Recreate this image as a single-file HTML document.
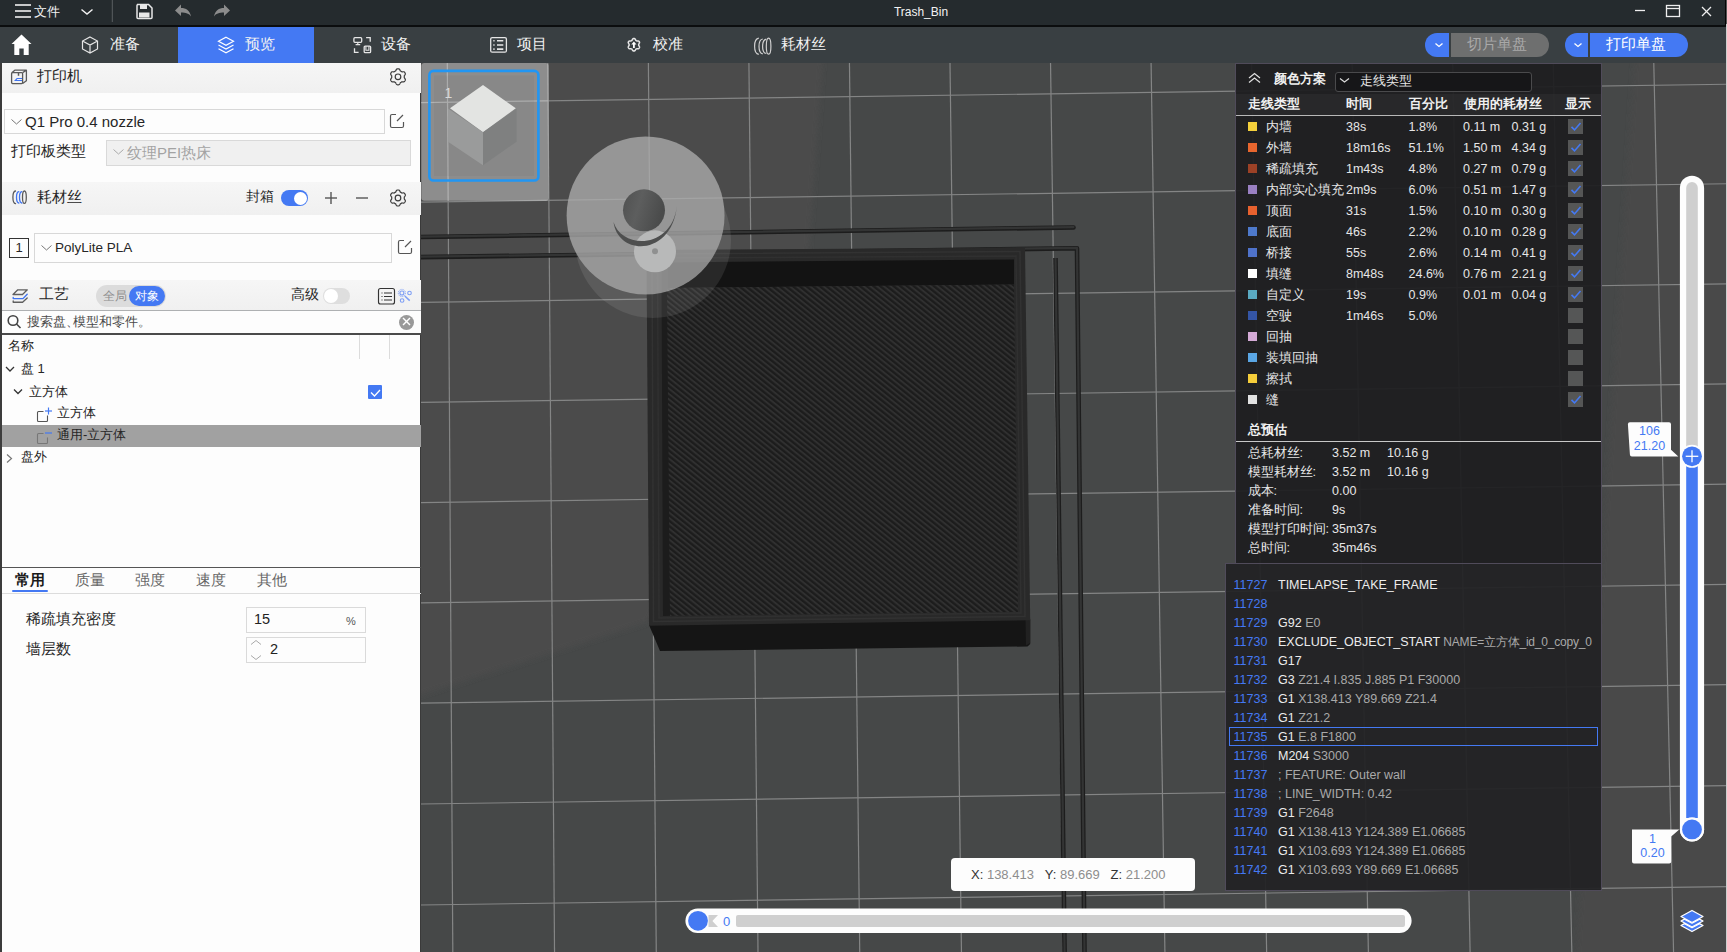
<!DOCTYPE html>
<html><head><meta charset="utf-8">
<style>
html,body{margin:0;padding:0;width:1727px;height:952px;overflow:hidden;background:#474a4a;font-family:"Liberation Sans",sans-serif;}
.a{position:absolute;white-space:nowrap;}
svg{position:absolute;overflow:visible;}
.tt{color:#f2f2f2;font-size:15px;line-height:16px;}
</style></head><body>
<!-- VIEWPORT -->
<svg class="a" style="left:0;top:0" width="1727" height="952" viewBox="0 0 1727 952">
<rect x="421" y="63" width="1306" height="889" fill="#464848"/>
<defs><filter id="bl" x="-5%" y="-5%" width="110%" height="110%"><feGaussianBlur stdDeviation="2.5"/></filter></defs>
<polygon points="415,55 823,55 808,260 648,622 415,697" fill="#4b4c4c" filter="url(#bl)"/>
<polygon points="1635,55 1740,55 1740,960 1576,960" fill="#494a4a" filter="url(#bl)"/>
<g stroke="#848585" stroke-width="1.2" fill="none">
<line x1="421" y1="102.69" x2="1727" y2="84.27"/>
<line x1="421" y1="202.19" x2="1727" y2="183.77"/>
<line x1="421" y1="302.29" x2="1727" y2="283.87"/>
<line x1="421" y1="402.39" x2="1727" y2="383.97"/>
<line x1="421" y1="502.59" x2="1727" y2="484.17"/>
<line x1="421" y1="602.79" x2="1727" y2="584.37"/>
<line x1="421" y1="703.09" x2="1727" y2="684.67"/>
<line x1="421" y1="803.99" x2="1727" y2="785.57"/>
<line x1="421" y1="904.99" x2="1727" y2="886.57"/>
<line x1="447.30" y1="63" x2="452.81" y2="952"/>
<line x1="547.84" y1="63" x2="554.54" y2="952"/>
<line x1="648.38" y1="63" x2="656.27" y2="952"/>
<line x1="748.92" y1="63" x2="758.00" y2="952"/>
<line x1="849.46" y1="63" x2="859.73" y2="952"/>
<line x1="950.00" y1="63" x2="961.46" y2="952"/>
<line x1="1050.54" y1="63" x2="1063.18" y2="952"/>
<line x1="1151.08" y1="63" x2="1164.91" y2="952"/>
<line x1="1251.62" y1="63" x2="1266.64" y2="952"/>
<line x1="1352.16" y1="63" x2="1368.37" y2="952"/>
<line x1="1452.70" y1="63" x2="1470.10" y2="952"/>
<line x1="1553.24" y1="63" x2="1571.83" y2="952"/>
<line x1="1653.78" y1="63" x2="1673.56" y2="952"/>
</g>
</svg>
<svg class="a" style="left:0;top:0" width="1727" height="952" viewBox="0 0 1727 952">
<defs>
<pattern id="hatch" patternUnits="userSpaceOnUse" width="4.2" height="10" patternTransform="rotate(-51.3)">
<rect width="4.2" height="10" fill="#1c1c1c"/><rect x="0.6" width="1.9" height="10" fill="#303030"/>
</pattern>
</defs>
<!-- travel lines -->
<g stroke="#1d1d1d" stroke-width="4.6" fill="none" stroke-linecap="round" stroke-linejoin="round">
<line x1="421" y1="237" x2="1073.5" y2="227.5"/>
<polyline points="421,257.1 1077,248.3 1084.5,952"/>
<line x1="1055.5" y1="258" x2="1064.6" y2="952" stroke-linecap="butt"/>
</g>
<g stroke="#333434" stroke-width="2.2" fill="none" stroke-linecap="round" stroke-linejoin="round">
<line x1="421" y1="236.6" x2="1073.5" y2="227.1"/>
<polyline points="421,256.7 1077,247.9 1084.5,952"/>
<line x1="1055.5" y1="258" x2="1064.6" y2="952" stroke-linecap="butt"/>
</g>
<!-- box front face -->
<polygon points="649,625 1030.2,619.5 1030.2,644 1027.5,646.5 660,651" fill="#151515"/>
<polygon points="1025.5,620 1030.2,619.6 1030.2,643 1026,645.5" fill="#212121"/>
<!-- box top face -->
<polygon points="646.5,250 1025,247.8 1030.2,620.2 649,625.7" fill="#292929"/>
<polygon points="652,254 1020,251.5 1025,616.5 653.5,621.5" fill="none" stroke="#323232" stroke-width="1.5"/>
<polygon points="657.5,258 1016,256 1021,613 659,618" fill="none" stroke="#303030" stroke-width="1.5"/>
<polygon points="662,262.5 1014,259.4 1014,284.6 667,288" fill="#131313"/>
<polygon points="661.5,262.5 668,262 670,615.7 663,616" fill="#1c1c1c"/>
<polygon points="667,288 1014,284.6 1018,612 670,615.7" fill="url(#hatch)"/>
<!-- thumbnail panel -->
<rect x="421.3" y="62.9" width="127.3" height="137.8" rx="3" fill="#fff" fill-opacity="0.37"/>
<rect x="434" y="75.5" width="100" height="100.5" fill="#000" fill-opacity="0.03"/>
<rect x="429.4" y="70.9" width="109" height="109.6" rx="4" fill="none" stroke="#2196f3" stroke-width="2.6"/>
<polygon points="483,85 515.8,108.3 483,132.2 450,108.3" fill="#e3e4e2"/>
<polygon points="448,108.6 483,132.2 483,165.3 448,141.7" fill="#9a9b9b"/>
<polygon points="483,132.2 516.6,108.6 516.6,141.7 483,165.3" fill="#7f8080"/>
<text x="444.5" y="98" font-size="14" fill="#d8d8d8" font-family="Liberation Sans">1</text>
<!-- gizmo -->
<mask id="m2"><rect x="500" y="100" width="300" height="300" fill="#fff"/><circle cx="645.6" cy="215.6" r="79" fill="#000"/></mask>
<circle cx="653" cy="240" r="78" fill="#fff" fill-opacity="0.09" mask="url(#m2)"/>
<circle cx="645.6" cy="215.6" r="79" fill="#adaeae" fill-opacity="0.76"/>
<circle cx="655" cy="251.3" r="21" fill="#b8b9b9"/>
<circle cx="655" cy="251.3" r="3" fill="#8f9090"/>
<defs><linearGradient id="dg" x1="0" y1="0" x2="1" y2="0.3"><stop offset="0" stop-color="#4f5050"/><stop offset="0.45" stop-color="#5d5e5e"/><stop offset="1" stop-color="#4a4b4b"/></linearGradient></defs>
<circle cx="644" cy="210.3" r="21" fill="url(#dg)"/>
<path d="M613.5,222 C618,256.7 672,256.7 677,205.5 C672,249.7 622,249.7 613.5,222 Z" fill="#4e4f4f"/>
</svg>

<!-- TITLE BAR -->
<div class="a" style="left:0;top:0;width:1727px;height:25px;background:#252b2e"></div>
<div class="a" style="left:0;top:25px;width:1727px;height:2px;background:#0b0d0e"></div>
<div class="a" style="left:0;top:27px;width:1727px;height:36px;background:#393f42"></div>
<div class="a" style="left:178px;top:27px;width:136px;height:36px;background:#4479f3"></div>
<!-- hamburger -->
<svg class="a" style="left:0;top:0" width="260" height="63">
<g stroke="#f0f0f0" stroke-width="1.6" fill="none">
<line x1="15" y1="5" x2="31" y2="5"/><line x1="15" y1="11" x2="31" y2="11"/><line x1="15" y1="17" x2="31" y2="17"/>
<polyline points="81.5,9.5 87,14 92.5,9.5" stroke-width="1.5"/>
</g>
<line x1="112.3" y1="0" x2="112.3" y2="22" stroke="#5a5f62" stroke-width="1"/>
<!-- save -->
<path d="M137,4.5 h11.5 l3.5,3.5 v9.5 a1,1 0 0 1 -1,1 h-13 a1,1 0 0 1 -1,-1 v-12 a1,1 0 0 1 1,-1 z" fill="none" stroke="#e8e8e8" stroke-width="1.5"/>
<rect x="140" y="4.5" width="7" height="4.5" fill="#e8e8e8"/>
<rect x="139" y="12.5" width="10.5" height="5" fill="#e8e8e8"/>
<!-- undo -->
<path d="M175,10.5 l6,-6 v3.5 c5,0 9,2.5 10,8.5 c-2,-3 -5,-4 -10,-4 v3.5 z" fill="#8c8c8c"/>
<path d="M230,10.5 l-6,-6 v3.5 c-5,0 -9,2.5 -10,8.5 c2,-3 5,-4 10,-4 v3.5 z" fill="#8c8c8c"/>
<!-- home -->
<path d="M21.5,34.5 L31.5,44 h-2.8 v11 h-5 v-6.5 h-4.4 v6.5 h-5 v-11 h-2.8 z" fill="#fff"/>
<!-- cube -->
<g fill="none" stroke="#e6e6e6" stroke-width="1.2">
<path d="M90,37 l7.5,4 v8 l-7.5,4 l-7.5,-4 v-8 z M82.5,41 l7.5,4 l7.5,-4 M90,45 v8"/>
</g>
<!-- layers (preview) -->
<g fill="none" stroke="#fff" stroke-width="1.2">
<path d="M226,37.3 l7.5,4 l-7.5,4 l-7.5,-4 z"/>
<path d="M218.5,45 l7.5,4 l7.5,-4"/>
<path d="M218.5,48.7 l7.5,4 l7.5,-4"/>
</g>
</svg>
<div class="a" style="left:34px;top:4px;color:#f2f2f2;font-size:13px;line-height:16px">文件</div>
<div class="a" style="left:0;top:4px;width:1842px;text-align:center;color:#f2f2f2;font-size:12px;line-height:16px">Trash_Bin</div>
<svg class="a" style="left:1620px;top:0" width="107" height="25">
<g stroke="#eee" stroke-width="1.3" fill="none">
<line x1="15" y1="10.5" x2="25" y2="10.5"/>
<rect x="46.5" y="5.5" width="13" height="11"/><line x1="46.5" y1="8.5" x2="59.5" y2="8.5"/>
<line x1="82" y1="7" x2="91" y2="16"/><line x1="91" y1="7" x2="82" y2="16"/>
</g>
</svg>
<!-- tab labels -->
<div class="a tt" style="left:110px;top:36px">准备</div>
<div class="a tt" style="left:245px;top:36px">预览</div>
<div class="a tt" style="left:381px;top:36px">设备</div>
<div class="a tt" style="left:517px;top:36px">项目</div>
<div class="a tt" style="left:653px;top:36px">校准</div>
<div class="a tt" style="left:781px;top:36px">耗材丝</div>
<svg class="a" style="left:340px;top:27px" width="450" height="36">
<g fill="none" stroke="#e6e6e6" stroke-width="1.2">
<!-- device icon -->
<rect x="13.9" y="10.7" width="7.8" height="4.6" rx="1" stroke-width="1.3"/>
<path d="M17.8,15.3 v2.2 M15.6,17.7 h4.6" stroke-width="1.2"/>
<path d="M26.1,10.6 H30.2 V14.7 M14.5,21.3 V25.4 H18.6" stroke-width="1.3"/>
<rect x="24.2" y="19.1" width="6.4" height="6.6" rx="1" stroke-width="1.3"/>
<path d="M25.9,19.3 V23.2 H28.9 V19.3" stroke-width="1.1"/>
<!-- project icon -->
<rect x="150.7" y="10.6" width="15.7" height="14.6" rx="1.5" stroke-width="1.3"/>
<path d="M153.3,13.8 h1.3 M157,13.8 h6.3 M153.3,18 h1.3 M157,18 h6.3 M153.3,22.1 h1.3 M157,22.1 h6.3" stroke-width="1.6"/>
<!-- calib icon -->
<path d="M298.70,17.80 L298.69,18.11 L298.71,18.43 L298.95,18.81 L299.21,19.22 L299.44,19.68 L299.58,20.15 L299.46,20.54 L299.27,20.90 L299.06,21.24 L298.77,21.54 L298.30,21.66 L297.79,21.69 L297.30,21.67 L296.86,21.65 L296.57,21.79 L296.30,21.96 L296.02,22.10 L295.76,22.29 L295.56,22.68 L295.32,23.11 L295.04,23.54 L294.70,23.89 L294.31,23.99 L293.90,24.00 L293.49,23.99 L293.10,23.89 L292.76,23.54 L292.48,23.11 L292.24,22.68 L292.04,22.29 L291.78,22.10 L291.50,21.96 L291.23,21.79 L290.94,21.65 L290.50,21.67 L290.01,21.69 L289.50,21.66 L289.03,21.54 L288.74,21.24 L288.53,20.90 L288.34,20.54 L288.22,20.15 L288.36,19.68 L288.59,19.22 L288.85,18.81 L289.09,18.43 L289.11,18.11 L289.10,17.80 L289.11,17.49 L289.09,17.17 L288.85,16.79 L288.59,16.38 L288.36,15.92 L288.22,15.45 L288.34,15.06 L288.53,14.70 L288.74,14.36 L289.03,14.06 L289.50,13.94 L290.01,13.91 L290.50,13.93 L290.94,13.95 L291.23,13.81 L291.50,13.64 L291.78,13.50 L292.04,13.31 L292.24,12.92 L292.48,12.49 L292.76,12.06 L293.10,11.71 L293.49,11.61 L293.90,11.60 L294.31,11.61 L294.70,11.71 L295.04,12.06 L295.32,12.49 L295.56,12.92 L295.76,13.31 L296.02,13.50 L296.30,13.64 L296.57,13.81 L296.86,13.95 L297.30,13.93 L297.79,13.91 L298.30,13.94 L298.77,14.06 L299.06,14.36 L299.27,14.70 L299.46,15.06 L299.58,15.45 L299.44,15.92 L299.21,16.38 L298.95,16.79 L298.71,17.17 L298.69,17.49 Z" stroke-width="1.5"/>
<path d="M293.9,14.6 L296.5,17.4 H294.8 V21 H293 V17.4 H291.3 Z" fill="#fff" stroke="none"/>
<!-- filament icon -->
<g stroke="#d0d0d0" stroke-width="1.2"><path d="M418.8,11.2 C415,11.8 414.6,15 414.6,19.2 C414.6,23.5 415,26.8 418.8,27.3"/><path d="M422.8,12 C419.5,12.5 419,15.5 419,19.4 C419,23.3 419.5,26.2 422.8,26.8"/><path d="M426.3,12.2 C423,12.8 422.6,15.7 422.6,19.4 C422.6,23 423,26 426.3,26.5"/><ellipse cx="428.6" cy="19.2" rx="2.3" ry="8"/></g>
</g>
</svg>
<!-- slice / print buttons -->
<div class="a" style="left:1425px;top:33px;width:24px;height:24px;background:#4479f3;border-radius:12px 0 0 12px"></div>
<div class="a" style="left:1451px;top:33px;width:98px;height:24px;background:#6e6f6f;border-radius:0 12px 12px 0"></div>
<div class="a" style="left:1565px;top:33px;width:23px;height:24px;background:#4479f3;border-radius:12px 0 0 12px"></div>
<div class="a" style="left:1590px;top:33px;width:98px;height:24px;background:#4479f3;border-radius:0 12px 12px 0"></div>
<svg class="a" style="left:1420px;top:33px" width="180" height="24">
<g fill="none" stroke="#fff" stroke-width="1.3"><polyline points="15.5,10.5 19,13.5 22.5,10.5"/><polyline points="154.5,10.5 158,13.5 161.5,10.5"/></g>
</svg>
<div class="a" style="left:1467px;top:36px;color:#a9a9a9;font-size:14.5px;line-height:16px">切片单盘</div>
<div class="a" style="left:1606px;top:36px;color:#fff;font-size:14.5px;line-height:16px">打印单盘</div>

<!-- LEFT PANEL -->
<div class="a" style="left:0;top:63px;width:421px;height:889px;background:#fdfdfd;border-right:1px solid #3a3a3a;box-sizing:border-box"></div>
<div class="a" style="left:0;top:63px;width:2px;height:889px;background:#3c3c3c"></div>
<style>
.hd{left:2px;width:419px;height:30px;background:linear-gradient(#f6f6f6,#f0f0f0);}
.t15{font-size:15px;line-height:16px;color:#262626;}
.t14{font-size:14px;line-height:16px;color:#262626;}
.t13{font-size:13px;line-height:16px;color:#262626;}
</style>
<!-- printer section -->
<div class="a hd" style="top:63px"></div>
<div class="a t15" style="left:37px;top:68px">打印机</div>
<div class="a" style="left:4px;top:109px;width:381px;height:25px;border:1px solid #d8d8d8;box-sizing:border-box;background:#fdfdfd"></div>
<div class="a" style="left:25px;top:113px;font-size:15px;line-height:17px;color:#262626">Q1 Pro 0.4 nozzle</div>
<div class="a t15" style="left:11px;top:143px">打印板类型</div>
<div class="a" style="left:106px;top:140px;width:305px;height:26px;border:1px solid #d9d9d9;box-sizing:border-box;background:#f0f0f0"></div>
<div class="a" style="left:127px;top:144px;font-size:15px;line-height:17px;color:#a3a3a3">纹理PEI热床</div>
<!-- filament section -->
<div class="a hd" style="top:182px;height:33px"></div>
<div class="a t15" style="left:37px;top:189px">耗材丝</div>
<div class="a t14" style="left:246px;top:188px">封箱</div>
<div class="a" style="left:281px;top:190px;width:27px;height:16px;border-radius:8px;background:#4479f3"></div>
<div class="a" style="left:294px;top:191.5px;width:13px;height:13px;border-radius:7px;background:#fff"></div>
<div class="a" style="left:9px;top:238px;width:20px;height:20px;border:1px solid #333;box-sizing:border-box;font-size:13px;line-height:18px;text-align:center;color:#262626">1</div>
<div class="a" style="left:34px;top:233px;width:358px;height:30px;border:1px solid #d8d8d8;box-sizing:border-box;background:#fdfdfd"></div>
<div class="a" style="left:55px;top:240px;font-size:13.5px;line-height:16px;color:#262626">PolyLite PLA</div>
<!-- process section -->
<div class="a hd" style="top:280px;height:31px"></div>
<div class="a" style="left:2px;top:310px;width:419px;height:1px;background:#aeb0b2"></div>
<div class="a t15" style="left:39px;top:286px">工艺</div>
<div class="a" style="left:96px;top:285px;width:70px;height:22px;border-radius:11px;background:#dcdcdc"></div>
<div class="a" style="left:129px;top:286px;width:36px;height:20px;border-radius:10px;background:#4479f3"></div>
<div class="a" style="left:103px;top:288px;font-size:12px;line-height:16px;color:#8d8d8d">全局</div>
<div class="a" style="left:135px;top:288px;font-size:12px;line-height:16px;color:#fff">对象</div>
<div class="a t14" style="left:291px;top:286px">高级</div>
<div class="a" style="left:323px;top:288px;width:27px;height:16px;border-radius:8px;background:#dedede"></div>
<div class="a" style="left:324px;top:289px;width:14px;height:14px;border-radius:7px;background:#fff"></div>
<!-- search -->
<div class="a" style="left:2px;top:311px;width:419px;height:23px;background:#fdfdfd"></div>
<div class="a" style="left:2px;top:333px;width:419px;height:2px;background:#4a4a4a"></div>
<div class="a" style="left:26.5px;top:314px;font-size:12.5px;line-height:16px;color:#4a4a4a">搜索盘<span style="margin-right:-6px">、</span>模型和零件。</div>
<div class="a" style="left:399px;top:315px;width:15px;height:15px;border-radius:8px;background:#999"></div>
<!-- tree -->
<div class="a t13" style="left:8px;top:338px">名称</div>
<div class="a" style="left:359px;top:335px;width:1px;height:24px;background:#dcdcdc"></div>
<div class="a" style="left:389px;top:335px;width:1px;height:24px;background:#dcdcdc"></div>
<div class="a t13" style="left:21px;top:361px">盘 1</div>
<div class="a t13" style="left:29px;top:384px">立方体</div>
<div class="a" style="left:368px;top:385px;width:14px;height:14px;background:#4479f3;border-radius:1px"></div>
<div class="a t13" style="left:57px;top:405px">立方体</div>
<div class="a" style="left:2px;top:425px;width:419px;height:22px;background:#a1a1a1"></div>
<div class="a t13" style="left:57px;top:427px">通用-立方体</div>
<div class="a t13" style="left:21px;top:449px">盘外</div>
<svg class="a" style="left:0;top:63px" width="421" height="889">
<g fill="none" stroke="#5a5a5a" stroke-width="1.3" stroke-linejoin="round">
<!-- printer icon -->
<rect x="11.6" y="9.6" width="11" height="11" rx="1"/>
<path d="M11.8,9.8 l3,-2.6 h11.6 v10.6 l-3.8,2.8 M22.6,9.6 l3.8,-2.4"/>
<path d="M18.5,9.6 v3.2" stroke-width="1.5"/>
</g>
<path d="M14,18 l2.8,-3 h5.2 v1.1 h-4.6 l-0.8,0.9 h5.4 v1 z" fill="#3f74f0"/>
<!-- gear icons -->
<g fill="none" stroke="#3c3c3c" stroke-width="1.2">
<path d="M404.30,13.80 L404.29,14.13 L404.27,14.46 L404.32,14.80 L404.61,15.20 L404.91,15.65 L405.17,16.13 L405.37,16.63 L405.31,17.05 L405.13,17.43 L404.93,17.80 L404.71,18.16 L404.47,18.50 L404.14,18.77 L403.61,18.85 L403.06,18.86 L402.52,18.82 L402.03,18.77 L401.70,18.90 L401.43,19.08 L401.15,19.26 L400.86,19.41 L400.56,19.56 L400.29,19.78 L400.09,20.23 L399.85,20.71 L399.57,21.18 L399.24,21.60 L398.84,21.76 L398.42,21.79 L398.00,21.80 L397.58,21.79 L397.16,21.76 L396.76,21.60 L396.43,21.18 L396.15,20.71 L395.91,20.23 L395.71,19.78 L395.44,19.56 L395.14,19.41 L394.85,19.26 L394.57,19.08 L394.30,18.90 L393.97,18.77 L393.48,18.82 L392.94,18.86 L392.39,18.85 L391.86,18.77 L391.53,18.50 L391.29,18.16 L391.07,17.80 L390.87,17.43 L390.69,17.05 L390.63,16.63 L390.83,16.13 L391.09,15.65 L391.39,15.20 L391.68,14.80 L391.73,14.46 L391.71,14.13 L391.70,13.80 L391.71,13.47 L391.73,13.14 L391.68,12.80 L391.39,12.40 L391.09,11.95 L390.83,11.47 L390.63,10.97 L390.69,10.55 L390.87,10.17 L391.07,9.80 L391.29,9.44 L391.53,9.10 L391.86,8.83 L392.39,8.75 L392.94,8.74 L393.48,8.78 L393.97,8.83 L394.30,8.70 L394.57,8.52 L394.85,8.34 L395.14,8.19 L395.44,8.04 L395.71,7.82 L395.91,7.37 L396.15,6.89 L396.43,6.42 L396.76,6.00 L397.16,5.84 L397.58,5.81 L398.00,5.80 L398.42,5.81 L398.84,5.84 L399.24,6.00 L399.57,6.42 L399.85,6.89 L400.09,7.37 L400.29,7.82 L400.56,8.04 L400.86,8.19 L401.15,8.34 L401.43,8.52 L401.70,8.70 L402.03,8.83 L402.52,8.78 L403.06,8.74 L403.61,8.75 L404.14,8.83 L404.47,9.10 L404.71,9.44 L404.93,9.80 L405.13,10.17 L405.31,10.55 L405.37,10.97 L405.17,11.47 L404.91,11.95 L404.61,12.40 L404.32,12.80 L404.27,13.14 L404.29,13.47 Z"/>
<circle cx="398" cy="13.8" r="2.8"/>
<path d="M404.30,135.00 L404.29,135.33 L404.27,135.66 L404.32,136.00 L404.61,136.40 L404.91,136.85 L405.17,137.33 L405.37,137.83 L405.31,138.25 L405.13,138.63 L404.93,139.00 L404.71,139.36 L404.47,139.70 L404.14,139.97 L403.61,140.05 L403.06,140.06 L402.52,140.02 L402.03,139.97 L401.70,140.10 L401.43,140.28 L401.15,140.46 L400.86,140.61 L400.56,140.76 L400.29,140.98 L400.09,141.43 L399.85,141.91 L399.57,142.38 L399.24,142.80 L398.84,142.96 L398.42,142.99 L398.00,143.00 L397.58,142.99 L397.16,142.96 L396.76,142.80 L396.43,142.38 L396.15,141.91 L395.91,141.43 L395.71,140.98 L395.44,140.76 L395.14,140.61 L394.85,140.46 L394.57,140.28 L394.30,140.10 L393.97,139.97 L393.48,140.02 L392.94,140.06 L392.39,140.05 L391.86,139.97 L391.53,139.70 L391.29,139.36 L391.07,139.00 L390.87,138.63 L390.69,138.25 L390.63,137.83 L390.83,137.33 L391.09,136.85 L391.39,136.40 L391.68,136.00 L391.73,135.66 L391.71,135.33 L391.70,135.00 L391.71,134.67 L391.73,134.34 L391.68,134.00 L391.39,133.60 L391.09,133.15 L390.83,132.67 L390.63,132.17 L390.69,131.75 L390.87,131.37 L391.07,131.00 L391.29,130.64 L391.53,130.30 L391.86,130.03 L392.39,129.95 L392.94,129.94 L393.48,129.98 L393.97,130.03 L394.30,129.90 L394.57,129.72 L394.85,129.54 L395.14,129.39 L395.44,129.24 L395.71,129.02 L395.91,128.57 L396.15,128.09 L396.43,127.62 L396.76,127.20 L397.16,127.04 L397.58,127.01 L398.00,127.00 L398.42,127.01 L398.84,127.04 L399.24,127.20 L399.57,127.62 L399.85,128.09 L400.09,128.57 L400.29,129.02 L400.56,129.24 L400.86,129.39 L401.15,129.54 L401.43,129.72 L401.70,129.90 L402.03,130.03 L402.52,129.98 L403.06,129.94 L403.61,129.95 L404.14,130.03 L404.47,130.30 L404.71,130.64 L404.93,131.00 L405.13,131.37 L405.31,131.75 L405.37,132.17 L405.17,132.67 L404.91,133.15 L404.61,133.60 L404.32,134.00 L404.27,134.34 L404.29,134.67 Z"/>
<circle cx="398" cy="135" r="2.8"/>
</g>
<!-- chevrons in dropdowns -->
<g fill="none" stroke="#777" stroke-width="1">
<polyline points="11.5,56.5 16.5,61 21.5,56.5"/>
<polyline points="113.5,86.5 118.5,91 123.5,86.5" stroke="#aaa"/>
<polyline points="41.5,182.5 46.5,187 51.5,182.5"/>
</g>
<!-- edit icons -->
<g fill="none" stroke="#555" stroke-width="1.2">
<path d="M396,51.5 h-4 a1.5,1.5 0 0 0 -1.5,1.5 v10 a1.5,1.5 0 0 0 1.5,1.5 h10 a1.5,1.5 0 0 0 1.5,-1.5 v-4 M397,58 l6,-6"/>
<path d="M404,177.5 h-4 a1.5,1.5 0 0 0 -1.5,1.5 v10 a1.5,1.5 0 0 0 1.5,1.5 h10 a1.5,1.5 0 0 0 1.5,-1.5 v-4 M405,184 l6,-6"/>
</g>
<!-- filament icon -->
<g fill="none" stroke-width="1.3" stroke-linecap="round">
<path d="M15.5,128 C13.2,128.3 12.9,131 12.9,134.2 C12.9,137.5 13.2,140.2 15.5,140.6" stroke="#5a5a5a"/>
<path d="M18.8,128.6 C16.8,129 16.5,131.5 16.5,134.2 C16.5,137 16.8,139.5 18.8,140" stroke="#3f74f0"/>
<path d="M21.8,128.6 C19.8,129 19.5,131.5 19.5,134.2 C19.5,137 19.8,139.5 21.8,140" stroke="#3f74f0"/>
<ellipse cx="24.4" cy="134.2" rx="1.9" ry="6.2" stroke="#5a5a5a"/>
</g>
<!-- plus minus -->
<g stroke="#555" stroke-width="1.4">
<line x1="325" y1="135" x2="337" y2="135"/><line x1="331" y1="129" x2="331" y2="141"/>
<line x1="356" y1="135" x2="368" y2="135"/>
</g>
<!-- process icon -->
<g fill="none" stroke-width="1.35" stroke-linejoin="round" stroke-linecap="round">
<path d="M13,231.5 L17.8,226.8 H27.3 L22.5,231.5 Z" stroke="#5f5f5f"/>
<path d="M13.2,234.4 V235.6 H23 L27.2,231.2" stroke="#3f74f0"/>
<path d="M13.2,238 V239.2 H22.6 L27.2,235" stroke="#5f5f5f"/>
</g>
<!-- list icon -->
<g fill="none" stroke="#333" stroke-width="1.15">
<rect x="378.5" y="225.5" width="16" height="15.5" rx="2"/>
<path d="M381.5,230 h1 M384,230 h8 M381.5,233.5 h1 M384,233.5 h8 M381.5,237 h1 M384,237 h8"/>
</g>
<g fill="none" stroke="#7d9ef5" stroke-width="1.1">
<circle cx="401.9" cy="230" r="2"/><circle cx="401.9" cy="230" r="3.6" stroke-dasharray="1.2 0.8" stroke-width="0.9"/><circle cx="409.5" cy="230" r="1.8"/><circle cx="402.1" cy="237.5" r="1.8"/><line x1="404.8" y1="233" x2="409.7" y2="237.6" stroke-width="1.5"/>
</g>
<!-- search icon -->
<g fill="none" stroke="#444" stroke-width="1.6"><circle cx="13" cy="257.5" r="4.8"/><line x1="16.5" y1="261" x2="20.5" y2="265"/></g>
<g stroke="#fff" stroke-width="1.4"><line x1="403" y1="255" x2="410" y2="262"/><line x1="410" y1="255" x2="403" y2="262"/></g>
<!-- tree chevrons -->
<g fill="none" stroke="#333" stroke-width="1.3">
<polyline points="6,304 10,308 14,304"/>
<polyline points="14,326.5 18,330.5 22,326.5"/>
</g>
<polyline points="7,391.5 11.5,395.5 7,399.5" fill="none" stroke="#777" stroke-width="1.2"/>
<polyline points="371,329.5 374.5,333 380,327" fill="none" stroke="#fff" stroke-width="1.3"/>
<!-- part icons -->
<g fill="none" stroke="#555" stroke-width="1.1">
<path d="M43.5,348.5 h-5 a1,1 0 0 0 -1,1 v8 a1,1 0 0 0 1,1 h8 a1,1 0 0 0 1,-1 v-5"/>
<path d="M43.5,370.5 h-5 a1,1 0 0 0 -1,1 v8 a1,1 0 0 0 1,1 h8 a1,1 0 0 0 1,-1 v-5" stroke="#777"/>
</g>
<g stroke="#4479f3" stroke-width="1.2"><line x1="45" y1="348" x2="52" y2="348"/><line x1="48.5" y1="344.5" x2="48.5" y2="351.5"/><line x1="45" y1="370" x2="52" y2="370"/></g>
</svg>
<!-- bottom tabs -->
<div class="a" style="left:2px;top:567px;width:419px;height:1px;background:#555"></div>
<div class="a" style="left:15px;top:572px;font-size:14.5px;line-height:16px;color:#1a1a1a;font-weight:bold">常用</div>
<div class="a" style="left:12px;top:590px;width:36px;height:2px;background:#4479f3;border-radius:1px"></div>
<div class="a" style="left:75px;top:572px;font-size:14.5px;line-height:16px;color:#666">质量</div>
<div class="a" style="left:135px;top:572px;font-size:14.5px;line-height:16px;color:#666">强度</div>
<div class="a" style="left:196px;top:572px;font-size:14.5px;line-height:16px;color:#666">速度</div>
<div class="a" style="left:257px;top:572px;font-size:14.5px;line-height:16px;color:#666">其他</div>
<div class="a" style="left:2px;top:593px;width:419px;height:1px;background:#dcdcdc"></div>
<div class="a t15" style="left:26px;top:611px">稀疏填充密度</div>
<div class="a" style="left:246px;top:607px;width:120px;height:26px;border:1px solid #dadada;box-sizing:border-box;background:#fdfdfd"></div>
<div class="a" style="left:254px;top:611px;font-size:14.5px;line-height:17px;color:#222">15</div>
<div class="a" style="left:346px;top:614px;font-size:11px;line-height:14px;color:#555">%</div>
<div class="a t15" style="left:26px;top:641px">墙层数</div>
<div class="a" style="left:246px;top:637px;width:120px;height:26px;border:1px solid #dadada;box-sizing:border-box;background:#fdfdfd"></div>
<div class="a" style="left:270px;top:641px;font-size:14.5px;line-height:17px;color:#222">2</div>
<svg class="a" style="left:246px;top:637px" width="30" height="26"><g fill="none" stroke="#aaa" stroke-width="1"><polyline points="5,7.5 10,3.5 15,7.5"/><polyline points="5,18.5 10,22.5 15,18.5"/></g></svg>

<style>
.lg{font-size:12.5px;line-height:14px;color:#e6e6e6;}
.lh{font-size:12.5px;line-height:14px;color:#f0f0f0;font-weight:bold;}
.sw{width:9px;height:9px;}
.cb{width:15px;height:15px;background:#555656;}
.gc{font-size:12.5px;line-height:14px;}
.gn{color:#4479f3;}
.gw{color:#ececec;}
.gg{color:#a9a9a9;}
</style>
<!-- legend panel -->
<div class="a" style="left:1235px;top:63px;width:367px;height:500px;background:rgba(29,29,31,0.93);border:1px solid #504b5a;border-bottom:none;box-sizing:border-box"></div>
<div class="a" style="left:1236px;top:94px;width:365px;height:21px;background:rgba(46,46,48,0.6)"></div>
<div class="a" style="left:1236px;top:115px;width:365px;height:1px;background:#b8b8b8"></div>
<div class="a" style="left:1334.5px;top:71.5px;width:197px;height:20px;border:1px solid #4a4a4c;border-radius:3px;box-sizing:border-box;background:#161618"></div>
<svg class="a" style="left:1236px;top:64px" width="365" height="40"><g fill="none" stroke="#e0e0e0" stroke-width="1.2"><polyline points="13,14 18.5,9.5 24,14"/><polyline points="13,18.5 18.5,14 24,18.5"/><polyline points="104,14.5 108.5,18 113,14.5" stroke="#ddd"/></g></svg>
<div class="a lh" style="left:1274px;top:71.5px">颜色方案</div>
<div class="a lg" style="left:1360px;top:73.5px">走线类型</div>
<div class="a lh" style="left:1248px;top:96.5px">走线类型</div>
<div class="a lh" style="left:1346px;top:96.5px">时间</div>
<div class="a lh" style="left:1409px;top:96.5px">百分比</div>
<div class="a lh" style="left:1463.5px;top:96.5px">使用的耗材丝</div>
<div class="a lh" style="left:1564.5px;top:96.5px">显示</div>
<div class="a sw" style="left:1248px;top:121.9px;background:#f5d03b"></div>
<div class="a lg" style="left:1265.5px;top:119.9px">内墙</div>
<div class="a lg" style="left:1346px;top:119.9px">38s</div>
<div class="a lg" style="left:1408.5px;top:119.9px">1.8%</div>
<div class="a lg" style="left:1463px;top:119.9px">0.11 m</div>
<div class="a lg" style="left:1511.5px;top:119.9px">0.31 g</div>
<div class="a cb" style="left:1568.3px;top:119.4px"></div>
<div class="a sw" style="left:1248px;top:142.9px;background:#e8662e"></div>
<div class="a lg" style="left:1265.5px;top:140.9px">外墙</div>
<div class="a lg" style="left:1346px;top:140.9px">18m16s</div>
<div class="a lg" style="left:1408.5px;top:140.9px">51.1%</div>
<div class="a lg" style="left:1463px;top:140.9px">1.50 m</div>
<div class="a lg" style="left:1511.5px;top:140.9px">4.34 g</div>
<div class="a cb" style="left:1568.3px;top:140.4px"></div>
<div class="a sw" style="left:1248px;top:163.9px;background:#9c4126"></div>
<div class="a lg" style="left:1265.5px;top:161.9px">稀疏填充</div>
<div class="a lg" style="left:1346px;top:161.9px">1m43s</div>
<div class="a lg" style="left:1408.5px;top:161.9px">4.8%</div>
<div class="a lg" style="left:1463px;top:161.9px">0.27 m</div>
<div class="a lg" style="left:1511.5px;top:161.9px">0.79 g</div>
<div class="a cb" style="left:1568.3px;top:161.4px"></div>
<div class="a sw" style="left:1248px;top:184.9px;background:#9a80c2"></div>
<div class="a lg" style="left:1265.5px;top:182.9px">内部实心填充</div>
<div class="a lg" style="left:1346px;top:182.9px">2m9s</div>
<div class="a lg" style="left:1408.5px;top:182.9px">6.0%</div>
<div class="a lg" style="left:1463px;top:182.9px">0.51 m</div>
<div class="a lg" style="left:1511.5px;top:182.9px">1.47 g</div>
<div class="a cb" style="left:1568.3px;top:182.4px"></div>
<div class="a sw" style="left:1248px;top:205.9px;background:#e8612e"></div>
<div class="a lg" style="left:1265.5px;top:203.9px">顶面</div>
<div class="a lg" style="left:1346px;top:203.9px">31s</div>
<div class="a lg" style="left:1408.5px;top:203.9px">1.5%</div>
<div class="a lg" style="left:1463px;top:203.9px">0.10 m</div>
<div class="a lg" style="left:1511.5px;top:203.9px">0.30 g</div>
<div class="a cb" style="left:1568.3px;top:203.4px"></div>
<div class="a sw" style="left:1248px;top:226.9px;background:#4e79cb"></div>
<div class="a lg" style="left:1265.5px;top:224.9px">底面</div>
<div class="a lg" style="left:1346px;top:224.9px">46s</div>
<div class="a lg" style="left:1408.5px;top:224.9px">2.2%</div>
<div class="a lg" style="left:1463px;top:224.9px">0.10 m</div>
<div class="a lg" style="left:1511.5px;top:224.9px">0.28 g</div>
<div class="a cb" style="left:1568.3px;top:224.4px"></div>
<div class="a sw" style="left:1248px;top:247.9px;background:#4f72ca"></div>
<div class="a lg" style="left:1265.5px;top:245.9px">桥接</div>
<div class="a lg" style="left:1346px;top:245.9px">55s</div>
<div class="a lg" style="left:1408.5px;top:245.9px">2.6%</div>
<div class="a lg" style="left:1463px;top:245.9px">0.14 m</div>
<div class="a lg" style="left:1511.5px;top:245.9px">0.41 g</div>
<div class="a cb" style="left:1568.3px;top:245.4px"></div>
<div class="a sw" style="left:1248px;top:268.9px;background:#ffffff"></div>
<div class="a lg" style="left:1265.5px;top:266.9px">填缝</div>
<div class="a lg" style="left:1346px;top:266.9px">8m48s</div>
<div class="a lg" style="left:1408.5px;top:266.9px">24.6%</div>
<div class="a lg" style="left:1463px;top:266.9px">0.76 m</div>
<div class="a lg" style="left:1511.5px;top:266.9px">2.21 g</div>
<div class="a cb" style="left:1568.3px;top:266.4px"></div>
<div class="a sw" style="left:1248px;top:289.9px;background:#5aaac2"></div>
<div class="a lg" style="left:1265.5px;top:287.9px">自定义</div>
<div class="a lg" style="left:1346px;top:287.9px">19s</div>
<div class="a lg" style="left:1408.5px;top:287.9px">0.9%</div>
<div class="a lg" style="left:1463px;top:287.9px">0.01 m</div>
<div class="a lg" style="left:1511.5px;top:287.9px">0.04 g</div>
<div class="a cb" style="left:1568.3px;top:287.4px"></div>
<div class="a sw" style="left:1248px;top:310.9px;background:#3455a6"></div>
<div class="a lg" style="left:1265.5px;top:308.9px">空驶</div>
<div class="a lg" style="left:1346px;top:308.9px">1m46s</div>
<div class="a lg" style="left:1408.5px;top:308.9px">5.0%</div>
<div class="a cb" style="left:1568.3px;top:308.4px"></div>
<div class="a sw" style="left:1248px;top:331.9px;background:#d4aad6"></div>
<div class="a lg" style="left:1265.5px;top:329.9px">回抽</div>
<div class="a cb" style="left:1568.3px;top:329.4px"></div>
<div class="a sw" style="left:1248px;top:352.9px;background:#5aa6e4"></div>
<div class="a lg" style="left:1265.5px;top:350.9px">装填回抽</div>
<div class="a cb" style="left:1568.3px;top:350.4px"></div>
<div class="a sw" style="left:1248px;top:373.9px;background:#f5cd3a"></div>
<div class="a lg" style="left:1265.5px;top:371.9px">擦拭</div>
<div class="a cb" style="left:1568.3px;top:371.4px"></div>
<div class="a sw" style="left:1248px;top:394.9px;background:#e2e2e2"></div>
<div class="a lg" style="left:1265.5px;top:392.9px">缝</div>
<div class="a cb" style="left:1568.3px;top:392.4px"></div>
<svg class="a" style="left:1568px;top:110px" width="16" height="300"><g fill="none" stroke="#4479f3" stroke-width="1.6">
<polyline points="3.5,16.9 6.5,19.9 12.5,12.9"/>
<polyline points="3.5,37.9 6.5,40.9 12.5,33.9"/>
<polyline points="3.5,58.9 6.5,61.9 12.5,54.9"/>
<polyline points="3.5,79.9 6.5,82.9 12.5,75.9"/>
<polyline points="3.5,100.9 6.5,103.9 12.5,96.9"/>
<polyline points="3.5,121.9 6.5,124.9 12.5,117.9"/>
<polyline points="3.5,142.9 6.5,145.9 12.5,138.9"/>
<polyline points="3.5,163.9 6.5,166.9 12.5,159.9"/>
<polyline points="3.5,184.9 6.5,187.9 12.5,180.9"/>
<polyline points="3.5,289.9 6.5,292.9 12.5,285.9"/>
</g></svg>
<div class="a lh" style="left:1247.5px;top:422.5px">总预估</div>
<div class="a" style="left:1236px;top:440.5px;width:365px;height:1px;background:#c8c8c8"></div>
<div class="a lg" style="left:1247.5px;top:446.1px">总耗材丝:</div>
<div class="a lg" style="left:1332px;top:446.1px">3.52 m</div>
<div class="a lg" style="left:1387px;top:446.1px">10.16 g</div>
<div class="a lg" style="left:1247.5px;top:465.1px">模型耗材丝:</div>
<div class="a lg" style="left:1332px;top:465.1px">3.52 m</div>
<div class="a lg" style="left:1387px;top:465.1px">10.16 g</div>
<div class="a lg" style="left:1247.5px;top:484.1px">成本:</div>
<div class="a lg" style="left:1332px;top:484.1px">0.00</div>
<div class="a lg" style="left:1247.5px;top:503.1px">准备时间:</div>
<div class="a lg" style="left:1332px;top:503.1px">9s</div>
<div class="a lg" style="left:1247.5px;top:522.1px">模型打印时间:</div>
<div class="a lg" style="left:1332px;top:522.1px">35m37s</div>
<div class="a lg" style="left:1247.5px;top:541.1px">总时间:</div>
<div class="a lg" style="left:1332px;top:541.1px">35m46s</div>
<!-- gcode panel -->
<div class="a" style="left:1225px;top:563px;width:377px;height:328px;background:rgba(33,33,35,0.93);border:1px solid #504b5a;box-sizing:border-box"></div>
<div class="a" style="left:1229px;top:727px;width:368.5px;height:19px;border:1px solid #4479f3;box-sizing:border-box"></div>
<div class="a gc gn" style="left:1233.5px;top:577.8px">11727</div>
<div class="a gc" style="left:1278px;top:577.8px"><span class="gw">TIMELAPSE_TAKE_FRAME</span></div>
<div class="a gc gn" style="left:1233.5px;top:596.8px">11728</div>
<div class="a gc gn" style="left:1233.5px;top:615.8px">11729</div>
<div class="a gc" style="left:1278px;top:615.8px"><span class="gw">G92</span> <span class="gg">E0</span></div>
<div class="a gc gn" style="left:1233.5px;top:634.8px">11730</div>
<div class="a gc" style="left:1278px;top:634.8px"><span class="gw">EXCLUDE_OBJECT_START</span> <span class="gg" style="font-size:12px;letter-spacing:-0.2px">NAME=立方体_id_0_copy_0</span></div>
<div class="a gc gn" style="left:1233.5px;top:653.8px">11731</div>
<div class="a gc" style="left:1278px;top:653.8px"><span class="gw">G17</span></div>
<div class="a gc gn" style="left:1233.5px;top:672.8px">11732</div>
<div class="a gc" style="left:1278px;top:672.8px"><span class="gw">G3</span> <span class="gg">Z21.4 I.835 J.885 P1 F30000</span></div>
<div class="a gc gn" style="left:1233.5px;top:691.8px">11733</div>
<div class="a gc" style="left:1278px;top:691.8px"><span class="gw">G1</span> <span class="gg">X138.413 Y89.669 Z21.4</span></div>
<div class="a gc gn" style="left:1233.5px;top:710.8px">11734</div>
<div class="a gc" style="left:1278px;top:710.8px"><span class="gw">G1</span> <span class="gg">Z21.2</span></div>
<div class="a gc gn" style="left:1233.5px;top:729.8px">11735</div>
<div class="a gc" style="left:1278px;top:729.8px"><span class="gw">G1</span> <span class="gg">E.8 F1800</span></div>
<div class="a gc gn" style="left:1233.5px;top:748.8px">11736</div>
<div class="a gc" style="left:1278px;top:748.8px"><span class="gw">M204</span> <span class="gg">S3000</span></div>
<div class="a gc gn" style="left:1233.5px;top:767.8px">11737</div>
<div class="a gc" style="left:1278px;top:767.8px"><span class="gg">; FEATURE: Outer wall</span></div>
<div class="a gc gn" style="left:1233.5px;top:786.8px">11738</div>
<div class="a gc" style="left:1278px;top:786.8px"><span class="gg">; LINE_WIDTH: 0.42</span></div>
<div class="a gc gn" style="left:1233.5px;top:805.8px">11739</div>
<div class="a gc" style="left:1278px;top:805.8px"><span class="gw">G1</span> <span class="gg">F2648</span></div>
<div class="a gc gn" style="left:1233.5px;top:824.8px">11740</div>
<div class="a gc" style="left:1278px;top:824.8px"><span class="gw">G1</span> <span class="gg">X138.413 Y124.389 E1.06685</span></div>
<div class="a gc gn" style="left:1233.5px;top:843.8px">11741</div>
<div class="a gc" style="left:1278px;top:843.8px"><span class="gw">G1</span> <span class="gg">X103.693 Y124.389 E1.06685</span></div>
<div class="a gc gn" style="left:1233.5px;top:862.8px">11742</div>
<div class="a gc" style="left:1278px;top:862.8px"><span class="gw">G1</span> <span class="gg">X103.693 Y89.669 E1.06685</span></div>
<!-- coordinates box -->
<div class="a" style="left:951px;top:858px;width:244px;height:32.5px;background:#fdfdfd;border-radius:4px"></div>
<div class="a" style="left:971px;top:867px;font-size:13px;line-height:15px;color:#333"><span>X: </span><span style="color:#8d8d8d">138.413</span>&nbsp;&nbsp;&nbsp;<span>Y: </span><span style="color:#8d8d8d">89.669</span>&nbsp;&nbsp;&nbsp;<span>Z: </span><span style="color:#8d8d8d">21.200</span></div>
<!-- right strip -->
<div class="a" style="left:1725px;top:0;width:1px;height:26px;background:#050505"></div><div class="a" style="left:1726px;top:0;width:1px;height:24px;background:#555"></div><div class="a" style="left:1726px;top:24px;width:1px;height:928px;background:#cfcfcf"></div>
<!-- vertical slider -->
<svg class="a" style="left:1600px;top:160px" width="127" height="792">
<rect x="79.9" y="15.8" width="24.2" height="665.7" rx="12.1" fill="#fdfdfd"/>
<rect x="86.2" y="22.1" width="11.6" height="274" rx="5.8" fill="#cfcfcf"/>
<rect x="86.2" y="296" width="11.6" height="362" fill="#4479f3"/>
<circle cx="92" cy="669.4" r="12.1" fill="#fdfdfd"/>
<circle cx="92" cy="669.4" r="9.9" fill="#4479f3"/>
<circle cx="92" cy="296.3" r="11.5" fill="#fdfdfd"/>
<circle cx="92" cy="296.3" r="9.9" fill="#4479f3"/>
<g stroke="#fff" stroke-width="1.3"><line x1="85.7" y1="296.3" x2="98.3" y2="296.3"/><line x1="92" y1="290.3" x2="92" y2="302.3"/></g>
<path d="M27.9,264.2 a2,2 0 0 1 2,-2 h39.1 a2,2 0 0 1 2,2 v25.5 l7.3,6.9 h-46.4 a2,2 0 0 1 -2,-2 z" fill="#fdfdfd"/>
<path d="M32,669.4 h47.3 l-8.1,7 v25.1 a2,2 0 0 1 -2,2 h-35.2 a2,2 0 0 1 -2,-2 z" fill="#fdfdfd"/>
<!-- layers icon -->
<g stroke="#fff" stroke-width="1.3" fill="#4479f3" stroke-linejoin="round" transform="translate(0,2)">
<path d="M81,763.5 l11,6 l11,-6 l-3.5,-1.9 l-7.5,4.1 l-7.5,-4.1 z"/>
<path d="M81,759 l11,6 l11,-6 l-3.5,-1.9 l-7.5,4.1 l-7.5,-4.1 z"/>
<path d="M81,754.5 l11,-6 l11,6 l-11,6 z"/>
</g>
</svg>
<div class="a" style="left:1628px;top:423.5px;width:43px;text-align:center;font-size:12.5px;line-height:15.2px;color:#4479f3">106<br>21.20</div>
<div class="a" style="left:1632px;top:831.5px;width:41px;text-align:center;font-size:12.5px;line-height:14.6px;color:#4479f3">1<br>0.20</div>
<!-- horizontal slider -->
<svg class="a" style="left:680px;top:900px" width="740" height="40">
<rect x="5.4" y="8.6" width="726.2" height="24.4" rx="12.2" fill="#fdfdfd"/>
<rect x="56" y="15" width="669" height="12" rx="2" fill="#cfcfcf"/>
<circle cx="18" cy="20.8" r="9.9" fill="#4479f3"/>
<path d="M28.5,15 h9.5 l-5.6,6 l5.6,6 h-9.5 z" fill="#cfcfcf"/>
</svg>
<div class="a" style="left:723px;top:913.5px;font-size:13px;line-height:15px;color:#4479f3">0</div>

</body></html>
